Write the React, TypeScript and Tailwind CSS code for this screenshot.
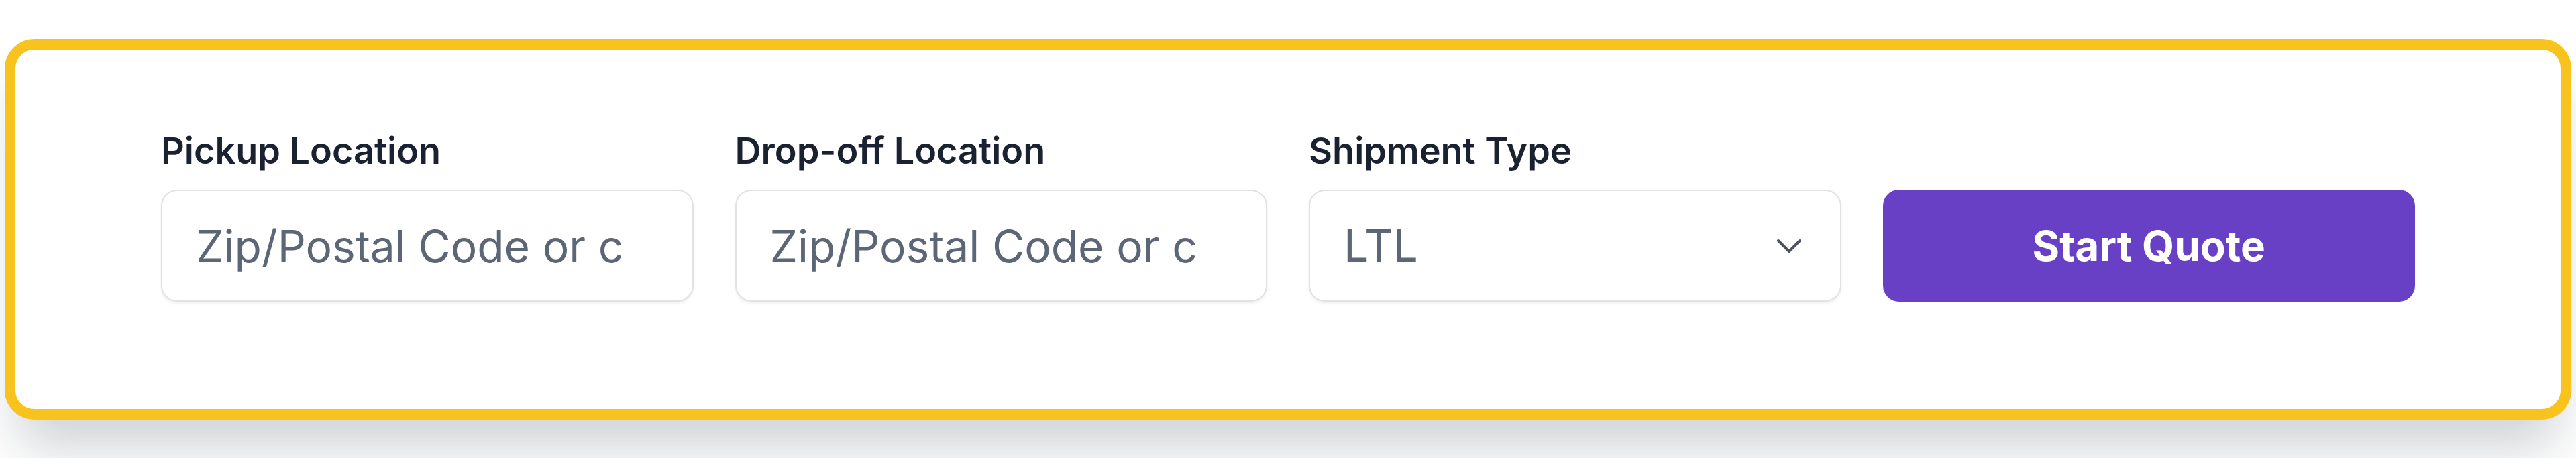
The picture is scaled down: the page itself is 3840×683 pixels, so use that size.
import { useState } from "react";

const FIELDS = [
  { id: "pickup", label: "Pickup Location" },
  { id: "dropoff", label: "Drop-off Location" },
];

function ChevronDown() {
  return (
    <svg width="36" height="22" viewBox="0 0 36 22" fill="none" className="shrink-0">
      <path d="M2 3 L18 19 L34 3" stroke="#4b5360" strokeWidth="4" strokeLinecap="round" strokeLinejoin="round" />
    </svg>
  );
}

export default function App() {
  const [type] = useState("LTL");

  return (
    <div className="min-h-screen bg-white pt-[58px] px-[7px] font-['Inter',sans-serif]">
      <div className="rounded-[44px] border-[16px] border-[#f7c31c] bg-white px-[217px] pt-[118px] pb-[160px] shadow-[0_60px_80px_-20px_rgba(15,23,42,0.2)]">
        <div className="grid grid-cols-4 items-end gap-[62px]">
          {FIELDS.map((f) => (
            <div key={f.id} className="flex flex-col">
              <label htmlFor={f.id} className="mb-[25px] text-[54px] leading-[66px] font-semibold text-[#1a2130]">
                {f.label}
              </label>
              {/* placeholder is cut off in the design, kept as shown */}
              <input
                id={f.id}
                placeholder="Zip/Postal Code or c"
                className="h-[167px] w-full rounded-[24px] border-2 border-[#e0e2e6] bg-white px-[50px] text-[66px] text-[#1a2130] shadow-[0_3px_4px_rgba(0,0,0,0.06)] placeholder:text-[#5c6676] outline-none"
              />
            </div>
          ))}

          {/* Shipment type */}
          <div className="flex flex-col">
            <label className="mb-[25px] text-[54px] leading-[66px] font-semibold text-[#1a2130]">
              Shipment Type
            </label>
            <div className="flex h-[167px] items-center justify-between rounded-[24px] border-2 border-[#e0e2e6] bg-white pl-[50px] pr-[58px] shadow-[0_3px_4px_rgba(0,0,0,0.06)]">
              <span className="text-[66px] text-[#5c6676]">{type}</span>
              <ChevronDown />
            </div>
          </div>

          <button className="h-[167px] rounded-[24px] bg-[#6740c5] text-[62px] font-bold text-white">
            Start Quote
          </button>
        </div>
      </div>
    </div>
  );
}
